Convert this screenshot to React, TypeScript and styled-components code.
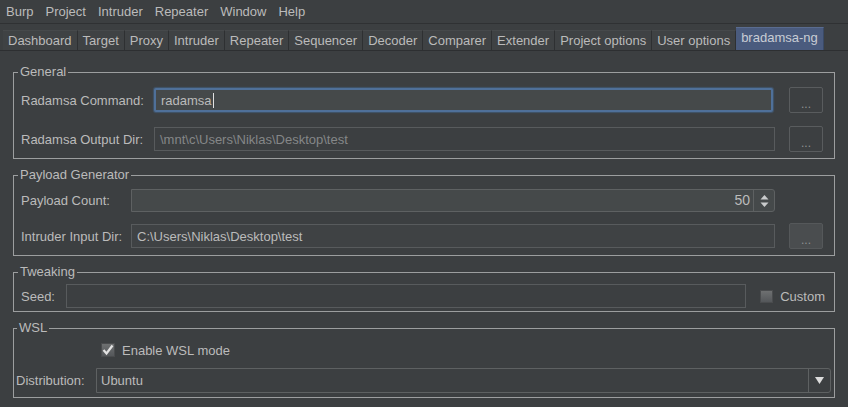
import React from "react";
import styled, { createGlobalStyle } from "styled-components";

const Global = createGlobalStyle`
  html, body { margin: 0; padding: 0; background: #3c3f41; }
  body {
    font-family: "Liberation Sans", Arial, sans-serif;
    font-size: 13px;
    color: #bbbbbb;
  }
  * { box-sizing: border-box; }
`;

const Window = styled.div`
  width: 848px;
  height: 407px;
  display: flex;
  flex-direction: column;
  background: #3c3f41;
  overflow: hidden;
`;

const MenuBar = styled.div`
  display: flex;
  height: 24px;
  align-items: center;
  border-bottom: 1px solid #2f3133;
`;

const MenuItem = styled.span`
  padding: 0 6px;
  line-height: 23px;
  color: #bbbbbb;
  &:first-child { padding-left: 6px; }
`;

const TabStrip = styled.div`
  display: flex;
  align-items: flex-end;
  height: 26px;
  padding-left: 3px;
`;

const Tab = styled.div<{ $active?: boolean }>`
  height: ${(p) => (p.$active ? 23 : 20)}px;
  padding: 0 5px;
  border-right: 1px solid ${(p) => (p.$active ? "#3a4a66" : "#2e3032")};
  border-top: 1px solid ${(p) => (p.$active ? "#5a6c90" : "#46494b")};
  background: ${(p) => (p.$active ? "#4a5b7e" : "#3f4244")};
  color: ${(p) => (p.$active ? "#c8ccd4" : "#bbbbbb")};
  display: flex;
  align-items: center;
  white-space: nowrap;
  padding-bottom: ${(p) => (p.$active ? 3 : 0)}px;
`;

const Content = styled.div`
  flex: 1;
  border-top: 1px solid #2d2f31;
  padding-top: 13px;
  display: flex;
  flex-direction: column;
  gap: 8px;
`;

const Group = styled.fieldset<{ $pl: number; $pr: number; $pt: number; $pb: number }>`
  margin: 0 13px;
  min-width: 0;
  border: 1px solid #9c9e9f;
  padding: ${(p) => `${p.$pt}px ${p.$pr}px ${p.$pb}px ${p.$pl}px`};
`;

const Legend = styled.legend<{ $ml: number }>`
  font-size: 13px;
  line-height: 16px;
  padding: 0 2px;
  margin-left: ${(p) => p.$ml}px;
  color: #bbbbbb;
`;

const Grid = styled.div<{ $cols: string; $rows: string; $rowGap: number; $colGap: number }>`
  display: grid;
  grid-template-columns: ${(p) => p.$cols};
  grid-template-rows: ${(p) => p.$rows};
  row-gap: ${(p) => p.$rowGap}px;
  column-gap: ${(p) => p.$colGap}px;
  align-items: center;
`;

const Label = styled.span`
  color: #bbbbbb;
  white-space: nowrap;
`;

const TextField = styled.div<{ $variant: "focus" | "normal" | "disabled" | "plain" }>`
  height: 24px;
  display: flex;
  align-items: center;
  padding-left: 5px;
  white-space: nowrap;
  overflow: hidden;
  border-radius: ${(p) => (p.$variant === "focus" ? 2 : 0)}px;
  border: ${(p) =>
    p.$variant === "focus" ? "2px solid #4f7099" : "1px solid #585b5d"};
  box-shadow: ${(p) => (p.$variant === "focus" ? "0 0 1px 1px rgba(70,110,160,0.45)" : "none")};
  background: ${(p) =>
    p.$variant === "focus" ? "#45494a" : p.$variant === "normal" ? "#3f4244" : "#3c3f41"};
  color: ${(p) => (p.$variant === "disabled" ? "#858788" : "#bbbbbb")};
  margin-right: ${(p) => (p.$variant === "focus" ? 2 : 0)}px;
`;

const Caret = styled.span`
  display: inline-block;
  width: 1px;
  height: 15px;
  background: #e0e0e0;
  margin-left: 1px;
`;

const DotsButton = styled.div<{ $raised?: boolean }>`
  height: 26px;
  border: 1px solid ${(p) => (p.$raised ? "#55585a" : "#595c5e")};
  border-radius: 2px;
  background: ${(p) => (p.$raised ? "#4a4d4f" : "#3c3f41")};
  color: #8f9192;
  font-size: 12px;
  display: flex;
  align-items: center;
  justify-content: center;
  padding-top: 7px;
`;

const Spinner = styled.div`
  height: 23px;
  display: flex;
  background: #45494a;
  border: 1px solid #5e6162;
  border-radius: 0 3px 3px 0;
`;

const SpinValue = styled.div`
  flex: 1;
  text-align: right;
  padding-right: 3px;
  line-height: 21px;
  color: #bbbbbb;
  font-size: 14px;
`;

const SpinButtons = styled.div`
  width: 21px;
  border-left: 1px solid #5e6162;
  display: flex;
  align-items: center;
  justify-content: center;
`;

const CheckRow = styled.label<{ $indent?: number }>`
  display: flex;
  align-items: center;
  gap: 7px;
  padding-left: ${(p) => p.$indent ?? 0}px;
  color: #bbbbbb;
  white-space: nowrap;
`;

const CheckBox = styled.span<{ $size: number }>`
  width: ${(p) => p.$size}px;
  height: ${(p) => p.$size}px;
  background: linear-gradient(#6e7071, #54575a);
  border: 1px solid #4a4c4e;
  display: flex;
  align-items: center;
  justify-content: center;
`;

const Combo = styled.div`
  height: 25px;
  display: flex;
  border: 1px solid #5e6162;
  border-radius: 0 3px 3px 0;
  background: #3c3f41;
`;

const ComboText = styled.div`
  flex: 1;
  padding-left: 4px;
  line-height: 23px;
  color: #bbbbbb;
`;

const ComboArrow = styled.div`
  width: 22px;
  border-left: 1px solid #5e6162;
  display: flex;
  align-items: center;
  justify-content: center;
`;

const menus = ["Burp", "Project", "Intruder", "Repeater", "Window", "Help"];
const tabs = [
  "Dashboard",
  "Target",
  "Proxy",
  "Intruder",
  "Repeater",
  "Sequencer",
  "Decoder",
  "Comparer",
  "Extender",
  "Project options",
  "User options",
  "bradamsa-ng",
];

export default function App() {
  return (
    <>
      <Global />
      <Window>
        <MenuBar>
          {menus.map((m) => (
            <MenuItem key={m}>{m}</MenuItem>
          ))}
        </MenuBar>
        <TabStrip>
          {tabs.map((t) => (
            <Tab key={t} $active={t === "bradamsa-ng"}>
              {t}
            </Tab>
          ))}
        </TabStrip>
        <Content>
          <Group $pl={7} $pr={11} $pt={7} $pb={6}>
            <Legend $ml={-3}>General</Legend>
            <Grid $cols="119px 1fr 34px" $rows="26px 26px" $rowGap={13} $colGap={14}>
              <Label>Radamsa Command:</Label>
              <TextField $variant="focus">
                radamsa
                <Caret />
              </TextField>
              <DotsButton>...</DotsButton>
              <Label>Radamsa Output Dir:</Label>
              <TextField $variant="disabled">\mnt\c\Users\Niklas\Desktop\test</TextField>
              <DotsButton>...</DotsButton>
            </Grid>
          </Group>

          <Group $pl={7} $pr={11} $pt={6} $pb={6}>
            <Legend $ml={-3}>Payload Generator</Legend>
            <Grid $cols="96px 1fr 34px" $rows="23px 26px" $rowGap={11} $colGap={14}>
              <Label>Payload Count:</Label>
              <Spinner>
                <SpinValue>50</SpinValue>
                <SpinButtons>
                  <svg width="9" height="14" viewBox="0 0 9 14">
                    <path d="M0.5 5.5 L4.5 1 L8.5 5.5 Z" fill="#c9cbcc" />
                    <path d="M0.5 8.5 L4.5 13 L8.5 8.5 Z" fill="#c9cbcc" />
                  </svg>
                </SpinButtons>
              </Spinner>
              <span />
              <Label>Intruder Input Dir:</Label>
              <TextField $variant="normal">C:\Users\Niklas\Desktop\test</TextField>
              <DotsButton $raised>...</DotsButton>
            </Grid>
          </Group>

          <Group $pl={7} $pr={9} $pt={4} $pb={3}>
            <Legend $ml={-3}>Tweaking</Legend>
            <Grid $cols="31px 1fr auto" $rows="24px" $rowGap={0} $colGap={14}>
              <Label>Seed:</Label>
              <TextField $variant="plain" />
              <CheckRow>
                <CheckBox $size={13} />
                Custom
              </CheckRow>
            </Grid>
          </Group>

          <Group $pl={2} $pr={3} $pt={4} $pb={4}>
            <Legend $ml={1}>WSL</Legend>
            <Grid $cols="80px 1fr" $rows="20px 25px" $rowGap={8} $colGap={0}>
              <span />
              <CheckRow $indent={5}>
                <CheckBox $size={14}>
                  <svg width="12" height="12" viewBox="0 0 12 12">
                    <path
                      d="M1.5 6 L4.5 9.5 L10.5 1.5"
                      stroke="#e2e2e2"
                      strokeWidth="2.2"
                      fill="none"
                    />
                  </svg>
                </CheckBox>
                Enable WSL mode
              </CheckRow>
              <Label>Distribution:</Label>
              <Combo>
                <ComboText>Ubuntu</ComboText>
                <ComboArrow>
                  <svg width="9" height="7" viewBox="0 0 9 7">
                    <path d="M0 0 L9 0 L4.5 7 Z" fill="#dcdcdc" />
                  </svg>
                </ComboArrow>
              </Combo>
            </Grid>
          </Group>
        </Content>
      </Window>
    </>
  );
}
